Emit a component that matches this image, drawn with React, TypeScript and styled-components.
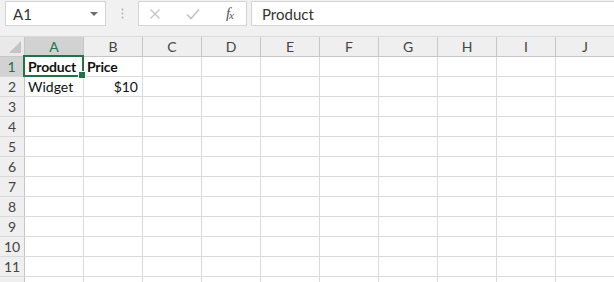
import React from 'react';
import styled, { createGlobalStyle } from 'styled-components';

const GlobalStyle = createGlobalStyle`
  html, body {
    margin: 0;
    padding: 0;
    background: #ffffff;
    overflow: hidden;
  }
  body {
    font-family: Lato, "Open Sans", "Liberation Sans", sans-serif;
  }
`;

const COLS = ['A', 'B', 'C', 'D', 'E', 'F', 'G', 'H', 'I', 'J'];
const ROWS = Array.from({ length: 12 }, (_, i) => i + 1);
const GREEN = '#217346';

const Sheet = styled.div`
  width: 614px;
  height: 282px;
  overflow: hidden;
  display: flex;
  flex-direction: column;
`;

const FormulaBar = styled.div`
  height: 37px;
  flex-shrink: 0;
  box-sizing: border-box;
  background: #f1f1f1;
  display: flex;
  align-items: flex-start;
  padding: 1px 0 0 5px;
  border-bottom: 1px solid #dadada;
`;

const NameBox = styled.div`
  width: 101px;
  height: 25px;
  box-sizing: border-box;
  background: #fff;
  border: 1px solid #d4d4d4;
  display: flex;
  align-items: center;
  justify-content: space-between;
  padding: 0 7px 0 7px;
  font-size: 15px;
  color: #333;
`;

const Caret = styled.span`
  width: 0;
  height: 0;
  border-left: 4px solid transparent;
  border-right: 4px solid transparent;
  border-top: 4px solid #6d6d6d;
`;

const Grip = styled.div`
  width: 32px;
  height: 25px;
  display: flex;
  align-items: center;
  justify-content: center;
`;

const FxBox = styled.div`
  width: 109px;
  height: 25px;
  box-sizing: border-box;
  background: #fff;
  border: 1px solid #d4d4d4;
  display: flex;
  align-items: center;
  justify-content: space-between;
  padding: 0 13px 0 10px;
`;

const FxLabel = styled.span`
  font-family: "Liberation Serif", "DejaVu Serif", serif;
  font-style: italic;
  font-size: 15px;
  color: #555;
  letter-spacing: -1px;
`;

const FxSmall = styled.span`
  font-size: 11px;
  vertical-align: -1px;
`;

const Input = styled.div`
  flex: 1;
  height: 25px;
  margin-left: 4px;
  box-sizing: border-box;
  background: #fff;
  border: 1px solid #d4d4d4;
  border-right: none;
  display: flex;
  align-items: center;
  padding-left: 10px;
  font-size: 15px;
  color: #333;
`;

const Grid = styled.div`
  display: grid;
  grid-template-columns: 25px repeat(10, 59px);
  grid-auto-rows: 20px;
`;

const Corner = styled.div`
  background: #e9e9e9;
  border-right: 1px solid #c6c6c6;
  border-bottom: 1px solid #c6c6c6;
  box-sizing: border-box;
  display: flex;
  align-items: flex-end;
  justify-content: flex-end;
  padding: 0 3px 3px 0;
`;

const ColHead = styled.div<{ $active?: boolean }>`
  box-sizing: border-box;
  background: ${(p) => (p.$active ? '#d2d2d2' : '#efefef')};
  color: ${(p) => (p.$active ? GREEN : '#444')};
  border-right: 1px solid #c6c6c6;
  border-bottom: ${(p) => (p.$active ? `2px solid ${GREEN}` : '1px solid #c6c6c6')};
  display: flex;
  align-items: center;
  justify-content: center;
  font-size: 14px;
  padding-top: ${(p) => (p.$active ? '1px' : '0')};
`;

const RowHead = styled.div<{ $active?: boolean }>`
  box-sizing: border-box;
  background: ${(p) => (p.$active ? '#d2d2d2' : '#efefef')};
  color: ${(p) => (p.$active ? GREEN : '#444')};
  border-right: ${(p) => (p.$active ? `2px solid ${GREEN}` : '1px solid #c6c6c6')};
  border-bottom: 1px solid #d9d9d9;
  display: flex;
  align-items: center;
  justify-content: center;
  font-size: 14px;
`;

const Cell = styled.div<{ $bold?: boolean; $right?: boolean }>`
  box-sizing: border-box;
  position: relative;
  border-right: 1px solid #dadada;
  border-bottom: 1px solid #dadada;
  display: flex;
  align-items: center;
  justify-content: ${(p) => (p.$right ? 'flex-end' : 'flex-start')};
  padding: 0 4px 0 3px;
  font-size: 14px;
  font-weight: ${(p) => (p.$bold ? 700 : 400)};
  letter-spacing: ${(p) => (p.$bold ? '-0.2px' : '0')};
  color: #111;
  white-space: nowrap;
`;

const Selection = styled.div`
  position: absolute;
  left: -2px;
  top: -2px;
  right: -1px;
  bottom: -1px;
  border: 2px solid ${GREEN};
  pointer-events: none;
  z-index: 2;
`;

const Handle = styled.div`
  position: absolute;
  right: -4px;
  bottom: -4px;
  width: 6px;
  height: 6px;
  background: ${GREEN};
  border: 1px solid #fff;
  z-index: 3;
`;

const data: Record<string, { text: string; bold?: boolean; right?: boolean }> = {
  A1: { text: 'Product', bold: true },
  B1: { text: 'Price', bold: true },
  A2: { text: 'Widget' },
  B2: { text: '$10', right: true },
};

const App: React.FC = () => {
  return (
    <Sheet>
      <GlobalStyle />
      <FormulaBar>
        <NameBox>
          <span>A1</span>
          <Caret />
        </NameBox>
        <Grip>
          <svg width="3" height="11" viewBox="0 0 3 11">
            <circle cx="1.5" cy="1.5" r="1" fill="#b0b0b0" />
            <circle cx="1.5" cy="5.5" r="1" fill="#b0b0b0" />
            <circle cx="1.5" cy="9.5" r="1" fill="#b0b0b0" />
          </svg>
        </Grip>
        <FxBox>
          <svg width="12" height="12" viewBox="0 0 12 12">
            <path d="M1.5 1.5 L10.5 10.5 M10.5 1.5 L1.5 10.5" stroke="#c4c4c4" strokeWidth="1.3" fill="none" />
          </svg>
          <svg width="14" height="12" viewBox="0 0 14 12">
            <path d="M1 6.5 L5 10.5 L13 1.5" stroke="#c4c4c4" strokeWidth="1.6" fill="none" />
          </svg>
          <FxLabel>
            f<FxSmall>x</FxSmall>
          </FxLabel>
        </FxBox>
        <Input>Product</Input>
      </FormulaBar>
      <Grid>
        <Corner>
          <svg width="12" height="12" viewBox="0 0 12 12">
            <path d="M12 0 L12 12 L0 12 Z" fill="#c3c3c3" />
          </svg>
        </Corner>
        {COLS.map((c) => (
          <ColHead key={c} $active={c === 'A'}>
            {c}
          </ColHead>
        ))}
        {ROWS.map((r) => (
          <React.Fragment key={r}>
            <RowHead $active={r === 1}>{r < 12 ? r : ''}</RowHead>
            {COLS.map((c) => {
              const id = `${c}${r}`;
              const d = data[id];
              return (
                <Cell key={id} $bold={d?.bold} $right={d?.right}>
                  {d?.text}
                  {id === 'A1' && (
                    <Selection>
                      <Handle />
                    </Selection>
                  )}
                </Cell>
              );
            })}
          </React.Fragment>
        ))}
      </Grid>
    </Sheet>
  );
};

export default App;
